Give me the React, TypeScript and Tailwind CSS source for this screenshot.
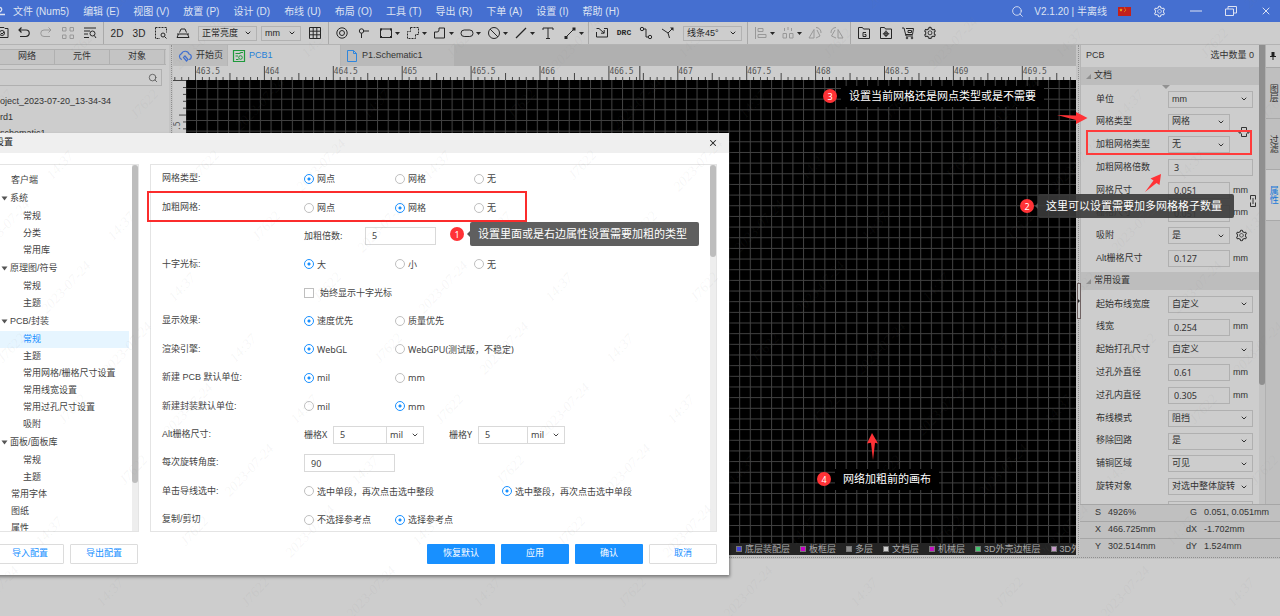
import type { ReactNode } from "react";
import { ChevronDown, Search, X } from "lucide-react";
import { AiOutlineSetting } from "react-icons/ai";

const menus = [
  "文件 (Num5)",
  "编辑 (E)",
  "视图 (V)",
  "放置 (P)",
  "设计 (D)",
  "布线 (U)",
  "布局 (O)",
  "工具 (T)",
  "导出 (R)",
  "下单 (A)",
  "设置 (I)",
  "帮助 (H)",
];

type TreeItem = { label: string; kind: "top" | "group" | "child"; active?: boolean };

const tree: TreeItem[] = [
  { label: "客户端", kind: "top" },
  { label: "系统", kind: "group" },
  { label: "常规", kind: "child" },
  { label: "分类", kind: "child" },
  { label: "常用库", kind: "child" },
  { label: "原理图/符号", kind: "group" },
  { label: "常规", kind: "child" },
  { label: "主题", kind: "child" },
  { label: "PCB/封装", kind: "group" },
  { label: "常规", kind: "child", active: true },
  { label: "主题", kind: "child" },
  { label: "常用网格/栅格尺寸设置", kind: "child" },
  { label: "常用线宽设置", kind: "child" },
  { label: "常用过孔尺寸设置", kind: "child" },
  { label: "吸附", kind: "child" },
  { label: "面板/面板库", kind: "group" },
  { label: "常规", kind: "child" },
  { label: "主题", kind: "child" },
  { label: "常用字体", kind: "top" },
  { label: "图纸", kind: "top" },
  { label: "属性", kind: "top" },
];

const layers = [
  { name: "底层装配层", color: "#4343d9" },
  { name: "板框层", color: "#c800c8" },
  { name: "多层", color: "#8c8c8c" },
  { name: "文档层", color: "#cfcfcf" },
  { name: "机械层", color: "#c012c0" },
  { name: "3D外壳边框层", color: "#45c26f" },
  { name: "3D外壳顶层", color: "#c69ac8" },
];

type Prop = { label: string; value: string; kind: "select" | "input"; wide?: boolean; unit?: string; gear?: boolean };

const docProps: Prop[] = [
  { label: "单位", value: "mm", kind: "select", wide: true },
  { label: "网格类型", value: "网格", kind: "select" },
  { label: "加粗网格类型", value: "无", kind: "select" },
  { label: "加粗网格倍数", value: "3", kind: "input", wide: true },
  { label: "网格尺寸", value: "0.051", kind: "input", unit: "mm" },
  { label: "栅格尺寸", value: "0.051", kind: "input", unit: "mm" },
  { label: "吸附", value: "是", kind: "select", gear: true },
  { label: "Alt栅格尺寸", value: "0.127", kind: "input", unit: "mm" },
];

const commonProps: Prop[] = [
  { label: "起始布线宽度", value: "自定义", kind: "select", wide: true },
  { label: "线宽", value: "0.254", kind: "input", unit: "mm" },
  { label: "起始打孔尺寸", value: "自定义", kind: "select", wide: true },
  { label: "过孔外直径", value: "0.61", kind: "input", unit: "mm" },
  { label: "过孔内直径", value: "0.305", kind: "input", unit: "mm" },
  { label: "布线模式", value: "阻挡", kind: "select", wide: true },
  { label: "移除回路", value: "是", kind: "select", wide: true },
  { label: "铺铜区域", value: "可见", kind: "select", wide: true },
  { label: "旋转对象", value: "对选中整体旋转", kind: "select", wide: true },
];

const status = [
  ["S", "4926%", "G", "0.051, 0.051mm"],
  ["X", "466.725mm", "dX", "-1.702mm"],
  ["Y", "302.514mm", "dY", "1.524mm"],
];

function Icon({ children, className = "" }: { children: ReactNode; className?: string }) {
  return (
    <svg
      viewBox="0 0 14 14"
      className={`size-[14px] shrink-0 ${className}`}
      fill="none"
      stroke="currentColor"
      strokeWidth="1"
      aria-hidden="true"
    >
      {children}
    </svg>
  );
}

function Tool({ label, children, faint, menu }: { label: string; children: ReactNode; faint?: boolean; menu?: boolean }) {
  return (
    <button
      type="button"
      aria-label={label}
      className={`flex h-full shrink-0 items-center justify-center ${menu ? "w-[27px] pl-1" : "w-[22px]"} ${
        faint ? "text-[#989898]" : "text-[#262626]"
      }`}
    >
      {children}
      {menu && (
        <svg viewBox="0 0 9 5" className="h-[5px] w-[9px] shrink-0" aria-hidden="true">
          <path d="M2 1h5L4.5 4z" fill="#262626" />
        </svg>
      )}
    </button>
  );
}

function Divider() {
  return <span className="mx-[2px] h-full w-px shrink-0 bg-[#a9a9a9]" />;
}

function Select({ label, value, className }: { label: string; value: string; className: string }) {
  return (
    <div className={`relative shrink-0 ${className}`}>
      <select aria-label={label} defaultValue={value} className="h-full w-full appearance-none bg-transparent pl-[3px] outline-none">
        <option>{value}</option>
      </select>
      <ChevronDown className="pointer-events-none absolute top-1/2 right-1 size-2 -translate-y-1/2" strokeWidth={3} />
    </div>
  );
}

function MenuBar() {
  return (
    <header className="flex h-[22px] shrink-0 items-center bg-[#456fd0] text-[10px] text-[#dde3f2]">
      <svg viewBox="0 0 6 10" className="h-[10px] w-[6px]" aria-hidden="true">
        <path d="M0 1.500a2 2 0 0 1 1 3.500L0 6M0 8.500h5" fill="none" stroke="currentColor" strokeWidth="1.3" />
      </svg>
      <nav className="flex gap-[14px] pl-[7px]">
        {menus.map((m) => (
          <button key={m} type="button" className="whitespace-nowrap">
            {m}
          </button>
        ))}
      </nav>
      <div className="ml-auto flex items-center pr-2">
        <button type="button" aria-label="搜索">
          <Search className="size-[13px]" strokeWidth={1.6} />
        </button>
        <span className="ml-[10px] whitespace-nowrap">V2.1.20 | 半离线</span>
        <svg viewBox="0 0 13 9" className="ml-[11px] h-[9px] w-[13px]" role="img" aria-label="中文">
          <rect width="13" height="9" fill="#c3201c" />
          <path d="M3 1.2l.5 1.2h1.2l-1 .8.4 1.2L3 3.7l-1.100.7.4-1.200-1-.8h1.200z" fill="#f0c419" />
          <path d="M6 1h.8M7 2.200h.8M7 3.500h.8M6 4.600h.8" stroke="#f0c419" strokeWidth=".7" />
        </svg>
        <button type="button" aria-label="设置" className="ml-[22px]">
          <AiOutlineSetting className="size-[13px]" />
        </button>
        <button type="button" aria-label="最小化" className="ml-[23px]">
          <Icon>
            <path d="M1 7h12" />
          </Icon>
        </button>
        <button type="button" aria-label="还原" className="ml-[21px]">
          <Icon>
            <path d="M1.500 5h8v6.500h-8zM4 5V2.500h8.500V9H9.500" />
          </Icon>
        </button>
        <button type="button" aria-label="关闭" className="ml-[22px]">
          <X className="size-[12px]" strokeWidth={2} />
        </button>
      </div>
    </header>
  );
}

function Toolbar() {
  return (
    <div className="flex h-[23px] shrink-0 items-center overflow-hidden border-b border-[#b3b3b3] bg-[#cdcdcd] text-[9px] text-[#262626]">
      <div className="-ml-[9px] flex h-full items-center">
        <Tool label="保存">
          <Icon>
            <path d="M1 2.500h3l1-1h4l1 1h3v9H1z" />
            <circle cx="7" cy="7" r="2.500" />
            <path d="M6 7l1 1 2-2" />
          </Icon>
        </Tool>
        <Tool label="撤销">
          <Icon>
            <path d="M4.500 1.500L2 4l2.500 2.500M2 4h7a3 3 0 0 1 0 6.500H3" strokeWidth="1.200" />
          </Icon>
        </Tool>
        <Tool label="重做" faint>
          <Icon>
            <path d="M9.500 1.500L12 4 9.500 6.500M12 4H5a3 3 0 0 0 0 6.500h6" />
          </Icon>
        </Tool>
        <Tool label="阵列" faint>
          <Icon>
            <path d="M1.500 1.500h3.500V5H1.500zM9 1.500h3.500V5H9zM1.500 9h3.500v3.500H1.500zM9 9h3.500v3.500H9z" />
          </Icon>
        </Tool>
        <Tool label="查找">
          <Icon>
            <path d="M1 2h12M1 5h6M1 8h4M1 11.500h5" />
            <circle cx="9.500" cy="7.500" r="2.500" />
            <path d="M11.300 9.500L13 12" />
          </Icon>
        </Tool>
        <Divider />
        <button type="button" className="w-[22px] text-[10px]">2D</button>
        <button type="button" className="w-[22px] text-[10px]">3D</button>
        <Tool label="框选缩放">
          <Icon>
            <path d="M1.500 1.500h11v5M1.500 1.500v11H6" strokeDasharray="2 1" />
            <circle cx="9" cy="9" r="2" />
            <path d="M10.500 10.500l2 2" />
          </Icon>
        </Tool>
        <Tool label="对称">
          <Icon>
            <path d="M3.500 6.500L5 3h4l1.500 3.500M1 8h12M2.500 8L1 11.500h12L11.500 8" />
          </Icon>
        </Tool>
      </div>
      <Select label="亮度" value="正常亮度" className="ml-1 h-[15px] w-[59px] border border-[#b2b2b2]" />
      <Select label="单位" value="mm" className="ml-1 h-[15px] w-[40px] border border-[#b2b2b2]" />
      <div className="ml-[3px] flex h-full items-center">
        <Tool label="网格">
          <Icon>
            <path d="M1.500 1.500h11v11h-11zM1.500 5.200h11M1.500 8.800h11M5.200 1.500v11M8.800 1.500v11" />
          </Icon>
        </Tool>
        <Divider />
        <Tool label="焊盘">
          <Icon>
            <circle cx="7" cy="7" r="5.200" />
            <circle cx="7" cy="7" r="2.500" />
          </Icon>
        </Tool>
        <Tool label="过孔">
          <Icon>
            <circle cx="4.500" cy="5" r="2.200" />
            <path d="M6.700 5H12M4.500 7.200V12" />
          </Icon>
        </Tool>
        <Tool label="矩形" menu>
          <Icon>
            <path d="M1.500 3h11v8.500h-11z" />
            <path d="M1 2.500h2v2H1zM11 2.500h2v2h-2zM1 10h2v2H1zM11 10h2v2h-2z" fill="currentColor" stroke="none" />
          </Icon>
        </Tool>
        <Tool label="区域" menu>
          <Icon>
            <path d="M4.500 1.500h8v7h-3v4h-8v-7h3z" strokeDasharray="2 1" />
          </Icon>
        </Tool>
        <Tool label="多边形" menu>
          <Icon>
            <path d="M1.500 12v-6h2.500a2 2 0 0 0 2-2v-2h5.500v10z" />
          </Icon>
        </Tool>
        <Tool label="椭圆" menu>
          <Icon>
            <rect x="1" y="4" width="12" height="6.500" rx="3.200" />
          </Icon>
        </Tool>
        <Tool label="禁止区" menu>
          <Icon>
            <circle cx="7" cy="7" r="5.500" />
            <path d="M3 3l8 8" />
          </Icon>
        </Tool>
        <Tool label="线" menu>
          <Icon>
            <path d="M2 12L12 2" strokeWidth="1.200" />
          </Icon>
        </Tool>
        <Tool label="文字">
          <Icon>
            <path d="M2 4V2h10v2M7 2v10.500M5 12.500h4" />
          </Icon>
        </Tool>
        <Tool label="标注" menu>
          <Icon>
            <path d="M3 11l8-8" />
            <path d="M1.500 10h3v3h-3zM9.500 1.500h3v3h-3z" fill="currentColor" stroke="none" />
          </Icon>
        </Tool>
        <Divider />
        <Tool label="导入变更">
          <Icon>
            <path d="M4 2.500H1.500M4 2.500l5 4.500M9.200 4v3.200H6M9 2.500h3.500v8.500h-11V6" />
          </Icon>
        </Tool>
        <button type="button" className="w-[22px] font-['Liberation_Mono'] text-[8px] font-bold">DRC</button>
        <Tool label="布线">
          <Icon>
            <circle cx="3" cy="3" r="1.700" />
            <circle cx="11" cy="11" r="1.700" />
            <path d="M4.700 3H7v8h2.300" />
          </Icon>
        </Tool>
        <Tool label="差分布线">
          <Icon>
            <path d="M1 3l6 4 1.500 5M7 7l4-4" />
            <path d="M9 1.500h3.500V5z" fill="currentColor" stroke="none" />
          </Icon>
        </Tool>
      </div>
      <Select label="线条" value="线条45°" className="ml-1 h-[15px] w-[59px] border border-[#b2b2b2]" />
      <div className="ml-[3px] flex h-full items-center">
        <Divider />
        <Tool label="对齐" faint menu>
          <Icon>
            <path d="M1.500 1v12M4 2.500h5v3H4zM4 8.500h8v3H4z" />
          </Icon>
        </Tool>
        <Tool label="分布" faint menu>
          <Icon>
            <path d="M7 1v3M3.500 2v3M10.500 2v3M2 7.500h3.500v4.500H2zM8.500 7.500H12v4.500H8.500z" />
          </Icon>
        </Tool>
        <Tool label="左右翻转" faint>
          <Icon>
            <path d="M6 3.500V12H1zM8 12l4-2-3-6M8 1.500A5 5 0 0 1 13 7" />
          </Icon>
        </Tool>
        <Tool label="旋转" faint>
          <Icon>
            <path d="M8 3.500V12h5zM6 12L1.500 10 5 4M6 1.500A5 5 0 0 0 1 7" />
          </Icon>
        </Tool>
        <Divider />
        <Tool label="Gerber">
          <Icon>
            <path d="M1.500 12.500v-11h4l1 1.500h6v9.500z" />
            <path d="M9 6.500H6v4h3v-2H7.500" />
          </Icon>
        </Tool>
        <Tool label="坐标文件">
          <Icon>
            <path d="M1.500 12.500v-11h4l1 1.500h6v9.500z" />
            <circle cx="7" cy="7.800" r="2" />
            <path d="M7 4.500v6.500M3.800 7.800h6.500" />
          </Icon>
        </Tool>
        <Tool label="下单">
          <Icon>
            <path d="M1 2h2l2 8h7M5 2.500h7.500l-1 6H5M7 4.500h3.500v2H7z" />
            <circle cx="6" cy="12" r=".8" />
            <circle cx="11" cy="12" r=".8" />
          </Icon>
        </Tool>
        <Tool label="设置">
          <AiOutlineSetting className="size-[14px]" />
        </Tool>
      </div>
    </div>
  );
}

function LeftPanel() {
  return (
    <aside className="w-[169px] shrink-0 bg-[#cdcdcd] pt-1 text-[9px] text-[#333]">
      <div className="mr-[3px] flex h-4 border-t border-b border-[#b0b0b0] bg-[#c4c4c4]">
        {["网络", "元件", "对象"].map((t) => (
          <button key={t} type="button" className="w-[55px] border-r border-[#b0b0b0]">
            {t}
          </button>
        ))}
      </div>
      <div className="mt-1 mr-[7px] flex h-[17px] items-center border border-l-0 border-[#b0b0b0] pr-[3px]">
        <input aria-label="搜索" className="h-full w-full bg-transparent outline-none" />
        <Search className="size-[10px] shrink-0 text-[#555]" />
      </div>
      <ul className="mt-[7px] leading-4">
        <li>oject_2023-07-20_13-34-34</li>
        <li>rd1</li>
        <li>schematic1</li>
      </ul>
    </aside>
  );
}

function Splitter() {
  return (
    <div className="flex w-[4px] shrink-0 justify-center bg-[#c4c4c4]">
      <div className="w-0 border-l border-dotted border-[#8f8f8f]" />
    </div>
  );
}

const STEP = 6.89;

function HRuler() {
  const ticks = Array.from({ length: 131 }, (_, i) => i - 3);
  return (
    <svg className="h-[14px] w-full shrink-0 bg-[#cdcdcd]" aria-hidden="true">
      {ticks.map((i) => {
        const top = i % 10 === 0 ? 0 : i % 5 === 0 ? 7 : 11;
        return <rect key={i} x={22 + i * STEP} y={top} width="1" height={14 - top} fill="#444" />;
      })}
      {Array.from({ length: 13 }, (_, i) => (
        <text key={i} x={23 + i * STEP * 10} y="8" fontSize="8" fill="#555" fontFamily="DejaVu Sans Mono, monospace">
          {463.5 + i * 0.5}
        </text>
      ))}
      <rect x="466" width="1.500" height="14" fill="#666" />
    </svg>
  );
}

function VRuler() {
  return (
    <svg className="h-full w-[13px] shrink-0 bg-[#cdcdcd]" aria-hidden="true">
      <rect width="13" height="1" fill="#444" />
      {Array.from({ length: 70 }, (_, i) => {
        const w = i % 5 === 4 ? 7 : 3;
        return <rect key={i} x={13 - w} y={7 + i * STEP} width={w} height="1" fill="#444" />;
      })}
      <text x="7" y="51" fontSize="8" fill="#555" fontFamily="DejaVu Sans Mono, monospace" transform="rotate(-90 7 51)">
        .5
      </text>
    </svg>
  );
}

function Board() {
  return (
    <section className="flex min-w-0 flex-1 flex-col">
      <div className="flex h-[21px] shrink-0 bg-[#b0b0b0] text-[9px] text-[#333]">
        <button type="button" className="flex w-[54px] items-center gap-1 bg-[#bdbdbd] pl-[5px] whitespace-nowrap">
          <Icon className="text-[#3f6fd0]">
            <path d="M4 10.500a3 3 0 0 1-.5-5.800A4 4 0 0 1 11 5a2.800 2.800 0 0 1 0 5.500M5.500 8.500L7 7l3 3.500L8.500 12z" strokeWidth="1.200" />
          </Icon>
          开始页
        </button>
        <button type="button" className="flex w-[114px] items-center gap-[3px] border-x border-[#b5b5b5] bg-[#cdcdcd] pl-[4px] text-[#1f7fd8]">
          <Icon className="text-[#1f9a3c]">
            <path d="M1.500 1.500h11v11h-11zM3.500 4.500h4l1.500-1h2M3.500 7H6M4 10.500h2.500" strokeWidth="1.200" />
            <circle cx="8.500" cy="8.500" r="1.800" />
          </Icon>
          PCB1
        </button>
        <button type="button" className="flex w-[113px] items-center gap-[3px] bg-[#bababa] pl-[4px]">
          <Icon className="text-[#2f86dd]">
            <path d="M2.500 1.500h6l3 3v8h-9zM8.500 1.500v3h3" />
          </Icon>
          P1.Schematic1
        </button>
      </div>
      <HRuler />
      <div className="flex min-h-0 flex-1">
        <VRuler />
        <svg className="h-full min-w-0 flex-1 bg-black" aria-label="画布">
          <defs>
            <pattern id="mesh" x="10" y="8" width="10.65" height="10.66" patternUnits="userSpaceOnUse">
              <path d="M.5 0v10.660M0 .5h10.650" stroke="#424242" strokeWidth="1" />
            </pattern>
          </defs>
          <rect width="100%" height="100%" fill="url(#mesh)" />
        </svg>
      </div>
      <ul className="flex h-[12px] shrink-0 items-center gap-[10px] overflow-hidden bg-[#242424] pl-[563px] text-[9px] leading-3 text-[#a8a8a8]">
        {layers.map((l) => (
          <li key={l.name} className="flex shrink-0 items-center gap-[3px]">
            <span className="size-[6px] border border-[#777]" style={{ backgroundColor: l.color }} />
            {l.name}
          </li>
        ))}
      </ul>
    </section>
  );
}

function PropRow({ p }: { p: Prop }) {
  return (
    <div className="flex items-center">
      <span className="w-[72px] shrink-0">{p.label}</span>
      {p.kind === "select" ? (
        <Select
          label={p.label}
          value={p.value}
          className={`h-[17px] border border-[#b0b0b0] ${p.wide ? "w-[85px]" : "w-[62px]"}`}
        />
      ) : (
        <input
          aria-label={p.label}
          defaultValue={p.value}
          className={`h-[17px] border border-[#b0b0b0] bg-transparent pl-[5px] font-['Noto_Sans'] outline-none ${
            p.wide ? "w-[85px]" : "w-[62px]"
          }`}
        />
      )}
      {p.unit && <span className="ml-[3px]">{p.unit}</span>}
      {p.gear && (
        <button type="button" aria-label="吸附设置" className="ml-[5px]">
          <AiOutlineSetting className="size-[13px]" />
        </button>
      )}
    </div>
  );
}

function SectionTitle({ children }: { children: ReactNode }) {
  return (
    <h2 className="flex h-[18px] items-center gap-[3px] bg-[#bdbdbd] pl-[5px]">
      <svg viewBox="0 0 5 5" className="size-[5px]" aria-hidden="true">
        <path d="M5 0v5H0z" fill="#8f8f8f" />
      </svg>
      {children}
    </h2>
  );
}

function RightPanel() {
  return (
    <aside className="relative flex w-[200px] shrink-0 flex-col bg-[#cdcdcd] text-[9px] text-[#333]">
      <div className="flex min-h-0 flex-1">
        <div className="relative min-w-0 flex-1 overflow-hidden border-l border-[#b5b5b5]">
          <div className="flex h-[22px] items-center justify-between pr-[5px] pl-[5px]">
            <span>PCB</span>
            <span>选中数量 0</span>
          </div>
          <SectionTitle>文档</SectionTitle>
          <div className="mt-[3px] grid h-[182px] auto-rows-fr pl-[15px]">
            {docProps.map((p) => (
              <PropRow key={p.label} p={p} />
            ))}
          </div>
          <div className="mt-[2px]">
            <SectionTitle>常用设置</SectionTitle>
          </div>
          <div className="mt-[3px] grid h-[205px] auto-rows-fr pl-[15px]">
            {commonProps.map((p) => (
              <PropRow key={p.label} p={p} />
            ))}
          </div>
          <input aria-label="旋转角度" className="mt-[3px] ml-[87px] h-[17px] w-[85px] border border-[#b0b0b0] bg-transparent outline-none" />
          {/* fold marker under the section title and the two link brackets */}
          <svg viewBox="0 0 8 4" className="absolute top-[40px] left-[81px] h-1 w-2" aria-hidden="true">
            <path d="M0 0h8L4 4z" fill="#929292" />
          </svg>
          <svg viewBox="0 0 12 12" className="absolute top-[81px] left-[157px] size-3" fill="none" stroke="#333" aria-hidden="true">
            <path d="M3.500 4.500v-3h5v3M3.500 7.500v3h5v-3M0 6h3M9 6h3M2 4v4M10 4v4" />
          </svg>
          <svg viewBox="0 0 6 12" className="absolute top-[150px] left-[169px] h-3 w-[6px]" fill="none" stroke="#333" aria-hidden="true">
            <path d="M.5 4.500v-4h5v4M.5 7.500v4h5v-4M3 3v6" />
          </svg>
        </div>
        <div className="w-[6px] shrink-0 bg-[#c2c2c2]">
          <div className="h-[340px] rounded-b bg-[#8f8f8f]" />
        </div>
        <div className="w-[15px] shrink-0 border-l border-[#b0b0b0] bg-[#bfbfbf]">
          <button type="button" aria-label="固定" className="flex h-[23px] w-full items-center justify-center border-b border-[#a9a9a9] bg-[#cdcdcd]">
            <svg viewBox="0 0 6 8" className="h-2 w-[6px]" aria-hidden="true">
              <path d="M1.500 0h3v4H6v1H3.500v3h-1V5H0V4h1.500z" fill="#222" />
            </svg>
          </button>
          {["图层", "过滤", "属性"].map((t) => (
            <button
              key={t}
              type="button"
              className={`flex h-[51px] w-full items-center justify-center border-b border-[#a9a9a9] [writing-mode:vertical-rl] ${
                t === "属性" ? "bg-[#cdcdcd] text-[#1677d8]" : ""
              }`}
            >
              {t}
            </button>
          ))}
        </div>
      </div>
      <table className="w-full shrink-0 table-fixed border-collapse bg-[#c0c0c0]">
        <tbody>
          {status.map((row) => (
            <tr key={row[0]} className="h-[17px] border-t border-[#a6a6a6]">
              <th scope="row" className="w-[28px] pl-[15px] text-left font-normal">{row[0]}</th>
              <td className="w-[67px]">{row[1]}</td>
              <th scope="row" className="w-[22px] text-right font-normal">{row[2]}</th>
              <td className="pl-[7px] whitespace-nowrap">{row[3]}</td>
            </tr>
          ))}
        </tbody>
      </table>
      {/* collapse handle on the splitter */}
      <button
        type="button"
        aria-label="折叠面板"
        className="absolute top-[238px] -left-[3px] flex h-[36px] w-[4px] items-center border border-[#6f6262] bg-[#cdcdcd]"
      >
        <svg viewBox="0 0 2 4" className="h-1 w-[2px]" aria-hidden="true">
          <path d="M0 0v4l2-2z" fill="#222" />
        </svg>
      </button>
    </aside>
  );
}

function Radio({ name, label, checked, className = "" }: { name: string; label: string; checked?: boolean; className?: string }) {
  return (
    <label className={`flex shrink-0 items-center gap-[3px] whitespace-nowrap ${className}`}>
      <input
        type="radio"
        name={name}
        defaultChecked={checked}
        className="size-[10px] shrink-0 appearance-none rounded-full border border-[#bfbfbf] bg-white checked:border-[#1890ff] checked:bg-[radial-gradient(circle,#1890ff_0_1px,#fff_2px)]"
      />
      {label}
    </label>
  );
}

function Row({ label, children }: { label: string; children: ReactNode }) {
  return (
    <div className="flex items-center pl-[11px]">
      <span className="w-[142px] shrink-0 font-['Liberation_Sans','Noto_Sans_CJK_SC',sans-serif]">{label}</span>
      {children}
    </div>
  );
}

const field = "h-[18px] shrink-0 border border-[#d9d9d9] bg-white pl-[6px] outline-none";

function SettingsForm() {
  return (
    <div className="relative flex min-w-0 flex-1">
      <form className="relative min-w-0 flex-1 overflow-hidden border border-[#e4e4e4] font-['Noto_Sans','Noto_Sans_CJK_SC',sans-serif]">
        <div className="grid h-[369px] auto-rows-fr">
          <Row label="网格类型:">
            <Radio name="mesh" label="网点" checked className="w-[91px]" />
            <Radio name="mesh" label="网格" className="w-[79px]" />
            <Radio name="mesh" label="无" />
          </Row>
          <Row label="加粗网格:">
            <Radio name="bold" label="网点" className="w-[91px]" />
            <Radio name="bold" label="网格" checked className="w-[79px]" />
            <Radio name="bold" label="无" />
          </Row>
          <Row label="">
            <label htmlFor="times" className="w-[61px]">加粗倍数:</label>
            <input id="times" defaultValue="5" className={`${field} w-[71px]`} />
          </Row>
          <Row label="十字光标:">
            <Radio name="cross" label="大" checked className="w-[91px]" />
            <Radio name="cross" label="小" className="w-[79px]" />
            <Radio name="cross" label="无" />
          </Row>
          <Row label="">
            <label className="flex items-center gap-[6px]">
              <input type="checkbox" className="size-[10px] appearance-none border border-[#bfbfbf] checked:bg-[#1890ff]" />
              始终显示十字光标
            </label>
          </Row>
          <Row label="显示效果:">
            <Radio name="effect" label="速度优先" checked className="w-[91px]" />
            <Radio name="effect" label="质量优先" />
          </Row>
          <Row label="渲染引擎:">
            <Radio name="engine" label="WebGL" checked className="w-[91px]" />
            <Radio name="engine" label="WebGPU(测试版，不稳定)" />
          </Row>
          <Row label="新建 PCB 默认单位:">
            <Radio name="pcbUnit" label="mil" checked className="w-[91px]" />
            <Radio name="pcbUnit" label="mm" />
          </Row>
          <Row label="新建封装默认单位:">
            <Radio name="fpUnit" label="mil" className="w-[91px]" />
            <Radio name="fpUnit" label="mm" checked />
          </Row>
          <Row label="Alt栅格尺寸:">
            <label htmlFor="gridX" className="w-[29px] whitespace-nowrap">栅格X</label>
            <input id="gridX" defaultValue="5" className={`${field} w-[54px]`} />
            <Select label="栅格X单位" value="mil" className="h-[18px] w-[37px] border border-l-0 border-[#d9d9d9]" />
            <label htmlFor="gridY" className="ml-[25px] w-[29px] whitespace-nowrap">栅格Y</label>
            <input id="gridY" defaultValue="5" className={`${field} w-[50px]`} />
            <Select label="栅格Y单位" value="mil" className="h-[18px] w-[37px] border border-l-0 border-[#d9d9d9]" />
          </Row>
          <Row label="每次旋转角度:">
            <input aria-label="每次旋转角度" defaultValue="90" className={`${field} w-[91px]`} />
          </Row>
          <Row label="单击导线选中:">
            <Radio name="pick" label="选中单段，再次点击选中整段" className="w-[198px]" />
            <Radio name="pick" label="选中整段，再次点击选中单段" checked />
          </Row>
          <Row label="复制/剪切">
            <Radio name="copy" label="不选择参考点" className="w-[91px]" />
            <Radio name="copy" label="选择参考点" checked />
          </Row>
        </div>
        <div className="absolute inset-y-0 right-0 w-[6px] bg-[#eee]">
          <div className="h-[92px] rounded-full bg-[#bdbdbd]" />
        </div>
      </form>
      <div className="pointer-events-none absolute top-[27px] -left-[3px] h-[31px] w-[380px] border-2 border-[#fb2c2c]" />
      <div className="absolute top-[58px] left-[300px] flex items-center gap-[3px]">
        <Badge n={1} />
        <Bubble className="bg-[#5f5f5f]">设置里面或是右边属性设置需要加粗的类型</Bubble>
      </div>
    </div>
  );
}

function Badge({ n }: { n: number }) {
  return (
    <span className="flex size-[14px] shrink-0 items-center justify-center rounded-full bg-[#ff3236] font-['Noto_Sans'] text-[9px] leading-none text-white">
      {n}
    </span>
  );
}

function Bubble({ children, className }: { children: ReactNode; className: string }) {
  return (
    <div className="flex items-center">
      <svg viewBox="0 0 3 6" className="h-[6px] w-[3px]" aria-hidden="true">
        <path d="M3 0v6L0 3z" fill="#555" />
      </svg>
      <p className={`flex h-6 items-center rounded-[2px] pr-3 pl-2 text-[11px] whitespace-nowrap text-white ${className}`}>{children}</p>
    </div>
  );
}

const outline = "h-5 w-[68px] rounded-[1px] border border-[#dcdcdc] bg-white text-[#1890ff]";
const solid = "h-5 w-[68px] rounded-[1px] bg-[#1890ff] text-white";

function SettingsDialog() {
  return (
    <div
      role="dialog"
      aria-label="设置"
      className="absolute top-[133px] -left-4 flex h-[442px] w-[745px] flex-col bg-white text-[9px] text-[#444] shadow-[1px_2px_3px_rgba(0,0,0,0.4)]"
    >
      <div className="flex h-5 shrink-0 items-center justify-between bg-[#efefef] pr-[11px] pl-[11px] text-[#222]">
        <h1>设置</h1>
        <button type="button" aria-label="关闭">
          <X className="size-[10px]" strokeWidth={2.5} />
        </button>
      </div>
      <div className="flex min-h-0 flex-1 gap-[11px] px-3 pt-[11px]">
        <div className="relative w-[143px] shrink-0 overflow-hidden border border-[#e4e4e4]">
          <ul className="pt-[7px] pr-[9px]">
            {tree.map((t, i) => (
              <li
                key={i}
                className={`flex items-center whitespace-nowrap ${
                  t.kind === "group" ? "h-[19px] gap-[2px] pl-1" : t.kind === "top" ? "h-[17px] pl-[14px]" : "h-[17px] pl-[26px]"
                } ${t.active ? "bg-[#e6f5ff] text-[#1890ff]" : ""}`}
              >
                {t.kind === "group" && (
                  <svg viewBox="0 0 7 5" className="h-[5px] w-[7px]" aria-hidden="true">
                    <path d="M.5.5h6L3.500 4.500z" fill="#555" />
                  </svg>
                )}
                {t.label}
              </li>
            ))}
          </ul>
          <div className="absolute inset-y-0 right-0 w-[6px] bg-[#eee]">
            <div className="h-[318px] rounded-full bg-[#bdbdbd]" />
          </div>
        </div>
        <SettingsForm />
      </div>
      <div className="flex h-[43px] shrink-0 items-center gap-[6px] px-3">
        <button type="button" className={outline}>导入配置</button>
        <button type="button" className={`${outline} mr-auto`}>导出配置</button>
        <button type="button" className={solid}>恢复默认</button>
        <button type="button" className={solid}>应用</button>
        <button type="button" className={solid}>确认</button>
        <button type="button" className={outline}>取消</button>
      </div>
    </div>
  );
}

function Notes() {
  return (
    <div className="pointer-events-none absolute inset-0 text-[11px] text-white">
      <div className="absolute top-[86px] right-[236px] flex items-center gap-1">
        <Badge n={3} />
        <p className="bg-black px-[8px] py-[2px] whitespace-nowrap">设置当前网格还是网点类型或是不需要</p>
      </div>
      <svg viewBox="0 0 32 12" className="absolute top-[112px] right-[192px] h-3 w-8" aria-hidden="true">
        <path d="M1 3l19 0.500V0l11.500 6L20 12V8z" fill="#ff3236" />
      </svg>
      <div className="absolute top-[130px] right-[28px] h-[25px] w-[166px] border-2 border-[#ff3b3b]" />
      <svg viewBox="0 0 16 18" className="absolute top-[174px] right-[119px] h-[18px] w-4" aria-hidden="true">
        <path d="M0 18L8.500 6.500 5.500 4.500 16 0 14.500 11l-3-2z" fill="#ff3236" />
      </svg>
      <div className="absolute top-[194px] right-[46px] flex items-center gap-px">
        <Badge n={2} />
        <Bubble className="bg-[#3a3a3a]/90">这里可以设置需要加多网格格子数量</Bubble>
      </div>
      <svg viewBox="0 0 11 27" className="absolute top-[433px] right-[402px] h-[27px] w-[11px]" aria-hidden="true">
        <path d="M5 0l6 10.500-3-.8L6 27 4 9.700l-4 .8z" fill="#ff3236" />
      </svg>
      <div className="absolute top-[469px] right-[341px] flex items-center gap-1">
        <Badge n={4} />
        <p className="bg-black px-[8px] py-[2px] whitespace-nowrap">网络加粗前的画布</p>
      </div>
    </div>
  );
}

// Faint user stamp repeated over the whole window on a diagonal lattice.
function Watermark() {
  const marks: { x: number; y: number; text: string }[] = [];
  for (let row = -2; row < 9; row++) {
    for (let col = -3; col < 4; col++) {
      const x = 638 + row * 61 + col * 377;
      const y = 105 + row * 61;
      marks.push({ x: x - 116, y, text: "J7622" }, { x, y, text: "2023-07-24" }, { x: x + 116, y, text: "14:37" });
    }
  }
  return (
    <svg className="pointer-events-none absolute inset-0 h-full w-full" aria-hidden="true">
      {marks
        .filter((m) => m.x > -30 && m.x < 1310)
        .map((m) => (
          <text
            key={`${m.x},${m.y}`}
            x={m.x}
            y={m.y}
            textAnchor="middle"
            dominantBaseline="middle"
            transform={`rotate(-47 ${m.x} ${m.y})`}
            fontFamily="Liberation Serif, serif"
            fontStyle="italic"
            fontSize="14"
            fill="#808080"
            fillOpacity="0.08"
          >
            {m.text}
          </text>
        ))}
    </svg>
  );
}

export default function App() {
  return (
    <div className="relative flex h-screen flex-col overflow-hidden bg-[#cdcdcd] font-['Liberation_Sans','Noto_Sans_CJK_SC',sans-serif]">
      <MenuBar />
      <Toolbar />
      <main className="flex min-h-0 flex-1">
        <LeftPanel />
        <Splitter />
        <Board />
        <Splitter />
        <RightPanel />
      </main>
      <div className="flex h-1 shrink-0 items-center bg-[#c0c0c0]">
        <div className="w-full border-t border-dotted border-[#8f8f8f]" />
      </div>
      <footer className="h-[57px] shrink-0" />
      <SettingsDialog />
      <Notes />
      <Watermark />
    </div>
  );
}
